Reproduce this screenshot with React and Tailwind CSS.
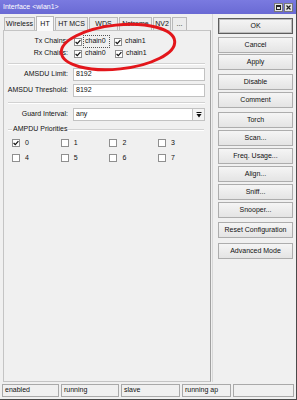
import React from "react";

const FONT = "font-['Liberation_Sans',Arial,sans-serif]";

function Check({ checked }) {
  return (
    <div className="w-[8px] h-[8px] bg-white border border-[#8f8f8f] flex items-center justify-center shrink-0">
      {checked && (
        <svg width="6" height="6" viewBox="0 0 6 6">
          <path d="M0.6 3 L2.3 4.7 L5.4 1.2" stroke="#111" strokeWidth="1.2" fill="none" />
        </svg>
      )}
    </div>
  );
}

function Btn({ children, def, mt }) {
  return (
    <div
      className={`h-[16px] w-[75px] flex items-center justify-center bg-gradient-to-b from-[#f5f5f5] to-[#e4e4e4] text-[7px] text-[#111] ${
        def ? "border border-[#5d5d5d] shadow-[inset_0_0_0_1px_#bcbcbc]" : "border border-[#adadad]"
      } ${mt || ""}`}
    >
      {children}
    </div>
  );
}

function Tab({ label, w, active }) {
  return (
    <div
      className={`${w} flex items-center justify-center border border-b-0 border-[#b9b9b9] text-[7px] text-[#111] ${
        active ? "h-[15px] -mt-[2px] bg-[#fbfbfb] relative z-10 -mb-px" : "h-[13px] bg-[#ececec]"
      }`}
    >
      {label}
    </div>
  );
}

function Label({ children }) {
  return <div className="w-[65px] text-right text-[7px] text-[#111] shrink-0 pr-[1px]">{children}</div>;
}

function Input({ value, w }) {
  return (
    <div className={`${w || "w-[132px]"} h-[13px] bg-white border border-[#c2c2c2] flex items-center pl-[2px] text-[7px] text-[#111]`}>
      {value}
    </div>
  );
}

function Sep() {
  return (
    <div className="ml-[4px] w-[197px] h-[2px] border-t border-[#d2d2d2] border-b border-b-white" />
  );
}

function Prio({ n, checked }) {
  return (
    <div className="w-[48.7px] flex items-center gap-[5px]">
      <Check checked={checked} />
      <span className="text-[7px] text-[#111]">{n}</span>
    </div>
  );
}

function Status({ text, w }) {
  return (
    <div className={`${w} h-[13px] border border-[#a9a9a9] bg-[#f0f0f0] flex items-center pl-[2px] text-[7px] text-[#111]`}>
      {text}
    </div>
  );
}

export default function App() {
  return (
    <div className={`${FONT} relative w-[297px] h-[400px] bg-[#f0f0f0] flex flex-col border-r border-b border-[#4a4a4a] overflow-hidden`}>
      {/* Title bar */}
      <div className="h-[14px] bg-gradient-to-b from-[#7a7ae0] to-[#6a6ad4] flex items-center pl-[3px] pr-[3px]">
        <span className="text-white text-[7px]">Interface &lt;wlan1&gt;</span>
        <div className="ml-auto flex gap-[1px] mt-[1px]">
          <div className="w-[9px] h-[9px] bg-[#e4e4e4] border border-[#7a7a7a] flex items-center justify-center">
            <div className="w-[5px] h-[5px] border border-[#222] border-t-2" />
          </div>
          <div className="w-[9px] h-[9px] bg-[#e4e4e4] border border-[#7a7a7a] flex items-center justify-center">
            <svg width="5" height="5" viewBox="0 0 5 5">
              <path d="M0.5 0.5 L4.5 4.5 M4.5 0.5 L0.5 4.5" stroke="#222" strokeWidth="1.2" />
            </svg>
          </div>
        </div>
      </div>

      {/* Main */}
      <div className="h-[368px] flex">
        {/* Left column */}
        <div className="w-[212px] pl-[3px] pt-[3px] flex flex-col">
          <div className="h-[13px] flex items-end pl-[1px] gap-[1px]">
            <Tab label="Wireless" w="w-[31px]" />
            <Tab label="HT" w="w-[18px]" active />
            <Tab label="HT MCS" w="w-[33px]" />
            <Tab label="WDS" w="w-[29px]" />
            <Tab label="Nstreme" w="w-[33px]" />
            <Tab label="NV2" w="w-[18px]" />
            <Tab label="..." w="w-[15px]" />
          </div>
          <div className="h-[352px] w-[208px] border border-[#c4c4c4] border-r-[#a0a0a0] bg-[#f0f0f0] flex flex-col">
            {/* Tx Chains */}
            <div className="mt-[5px] h-[11px] flex items-center">
              <Label>Tx Chains:</Label>
              <div className="ml-[5px] flex items-center">
                <Check checked />
                <span className="ml-[2px] px-[1px] text-[7px] text-[#111] outline outline-1 outline-dotted outline-[#555] w-[25px]">chain0</span>
                <div className="ml-[5px]"><Check checked /></div>
                <span className="ml-[3px] text-[7px] text-[#111]">chain1</span>
              </div>
            </div>
            {/* Rx Chains */}
            <div className="mt-[1px] h-[11px] flex items-center">
              <Label>Rx Chains:</Label>
              <div className="ml-[5px] flex items-center">
                <Check checked />
                <span className="ml-[3px] w-[25px] text-[7px] text-[#111]">chain0</span>
                <div className="ml-[5px]"><Check checked /></div>
                <span className="ml-[3px] text-[7px] text-[#111]">chain1</span>
              </div>
            </div>
            <div className="mt-[4px]"><Sep /></div>
            <div className="mt-[3px] flex items-center">
              <Label>AMSDU Limit:</Label>
              <div className="ml-[4px]"><Input value="8192" /></div>
            </div>
            <div className="mt-[3px] flex items-center">
              <Label>AMSDU Threshold:</Label>
              <div className="ml-[4px]"><Input value="8192" /></div>
            </div>
            <div className="mt-[5px]"><Sep /></div>
            <div className="mt-[4px] flex items-center">
              <Label>Guard Interval:</Label>
              <div className="ml-[4px] flex">
                <Input value="any" w="w-[120px]" />
                <div className="w-[12px] h-[13px] border border-l-0 border-[#c2c2c2] bg-[#f4f4f4] flex items-center justify-center">
                  <svg width="6" height="6" viewBox="0 0 6 6">
                    <path d="M0.5 0.5 H5.5" stroke="#111" strokeWidth="1" />
                    <path d="M0.5 2 L5.5 2 L3 5.5 Z" fill="#111" />
                  </svg>
                </div>
              </div>
            </div>
            {/* AMPDU Priorities group */}
            <div className="mt-[4px] h-[9px] flex items-center pl-[4px]">
              <div className="w-[4px] h-[2px] border-t border-[#d2d2d2] border-b border-b-white" />
              <span className="px-[1px] text-[7px] text-[#111]">AMPDU Priorities</span>
              <div className="w-[136px] h-[2px] border-t border-[#d2d2d2] border-b border-b-white" />
            </div>
            <div className="mt-[4px] pl-[8px] flex">
              <Prio n="0" checked />
              <Prio n="1" />
              <Prio n="2" />
              <Prio n="3" />
            </div>
            <div className="mt-[4px] pl-[8px] flex">
              <Prio n="4" />
              <Prio n="5" />
              <Prio n="6" />
              <Prio n="7" />
            </div>
          </div>
        </div>

        {/* Right column */}
        <div className="pl-[5px] pt-[4px] flex flex-col border-l border-[#d8d8d8]">
          <Btn def>OK</Btn>
          <Btn mt="mt-[3px]">Cancel</Btn>
          <Btn mt="mt-[1px]">Apply</Btn>
          <Btn mt="mt-[4px]">Disable</Btn>
          <Btn mt="mt-[2px]">Comment</Btn>
          <Btn mt="mt-[4px]">Torch</Btn>
          <Btn mt="mt-[2px]">Scan...</Btn>
          <Btn mt="mt-[2px]">Freq. Usage...</Btn>
          <Btn mt="mt-[2px]">Align...</Btn>
          <Btn mt="mt-[2px]">Sniff...</Btn>
          <Btn mt="mt-[2px]">Snooper...</Btn>
          <Btn mt="mt-[4px]">Reset Configuration</Btn>
          <Btn mt="mt-[5px]">Advanced Mode</Btn>
        </div>
      </div>

      {/* Status bar */}
      <div className="mt-[2px] pl-[2px] flex gap-[2px]">
        <Status text="enabled" w="w-[57px]" />
        <Status text="running" w="w-[58px]" />
        <Status text="slave" w="w-[59px]" />
        <Status text="running ap" w="w-[49px]" />
        <Status text="" w="w-[61px]" />
      </div>

      {/* Red annotation ellipse */}
      <svg className="absolute left-0 top-0 pointer-events-none" width="297" height="400" viewBox="0 0 297 400">
        <ellipse cx="118" cy="47" rx="57" ry="22" transform="rotate(-6 118 47)" fill="none" stroke="#e3161b" strokeWidth="3" />
      </svg>
    </div>
  );
}
